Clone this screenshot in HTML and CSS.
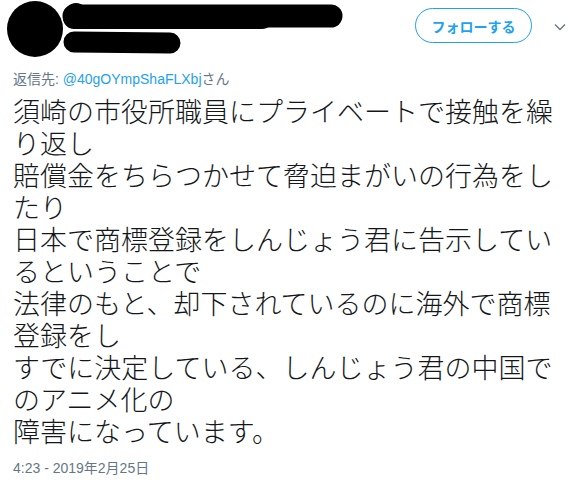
FILE: index.html
```html
<!DOCTYPE html>
<html lang="ja">
<head>
    <meta charset="UTF-8">
    <meta name="viewport" content="width=device-width, initial-scale=1.0">
    <title>ツイート</title>
    <link rel="stylesheet" href="styles.css">
</head>
<body>
    <div class="tweet">
        <div class="tweet-header">
            <svg class="redacted" width="345" height="58" viewBox="0 0 345 58">
                <circle cx="35" cy="29" r="28" fill="#000"/>
                <circle cx="76" cy="15" r="12" fill="#000"/>
                <line x1="74" y1="16" x2="331" y2="16" stroke="#000" stroke-width="23" stroke-linecap="round"/>
                <line x1="74" y1="18" x2="262" y2="18" stroke="#000" stroke-width="22" stroke-linecap="round"/>
                <line x1="74" y1="42" x2="170" y2="43" stroke="#000" stroke-width="21" stroke-linecap="round"/>
            </svg>
            <button class="follow-button">フォローする</button>
            <svg class="caret" width="12" height="8" viewBox="0 0 12 8">
                <polyline points="1,1.5 6,6.5 11,1.5" fill="none" stroke="#657786" stroke-width="1.4"/>
            </svg>
        </div>
        <div class="reply-to">返信先: <a class="mention" href="#">@40gOYmpShaFLXbj</a>さん</div>
        <p class="tweet-text">須崎の市役所職員にプライベートで接触を繰り返し<br>賠償金をちらつかせて脅迫まがいの行為をしたり<br>日本で商標登録をしんじょう君に告示しているということで<br>法律のもと、却下されているのに海外で商標登録をし<br>すでに決定している、しんじょう君の中国でのアニメ化の<br>障害になっています。</p>
        <div class="timestamp">4:23 - 2019年2月25日</div>
    </div>
</body>
</html>
```

FILE: styles.css
```css
body, html {
    margin: 0;
    padding: 0;
    background: #fff;
    color: #14171a;
    font-family: 'Liberation Sans', 'Noto Sans CJK JP', sans-serif;
}

.tweet {
    padding: 0 12px 0 13px;
}

.tweet-header {
    display: flex;
    align-items: flex-start;
    height: 58px;
}

.redacted {
    display: block;
    flex-shrink: 0;
    margin-left: -13px;
}

.follow-button {
    flex-shrink: 0;
    margin-left: auto;
    margin-top: 8px;
    height: 35px;
    width: 117px;
    padding: 0;
    border: 1px solid #1da1f2;
    border-radius: 100px;
    background: #fff;
    color: #1da1f2;
    font-family: 'Noto Sans CJK JP', sans-serif;
    font-size: 14px;
    font-weight: bold;
    cursor: pointer;
}

.caret {
    flex-shrink: 0;
    margin-left: 22px;
    margin-top: 23px;
}

.reply-to {
    margin-top: 11px;
    font-size: 14px;
    line-height: 20px;
    color: #657786;
}

.mention {
    color: #1da1f2;
    text-decoration: none;
}

.tweet-text {
    margin: 6px 0 0;
    font-family: 'Noto Sans CJK JP', sans-serif;
    font-size: 27px;
    font-weight: 300;
    line-height: 32px;
    color: #14171a;
}

.timestamp {
    margin-top: 11px;
    font-size: 14px;
    line-height: 20px;
    color: #657786;
}
```
